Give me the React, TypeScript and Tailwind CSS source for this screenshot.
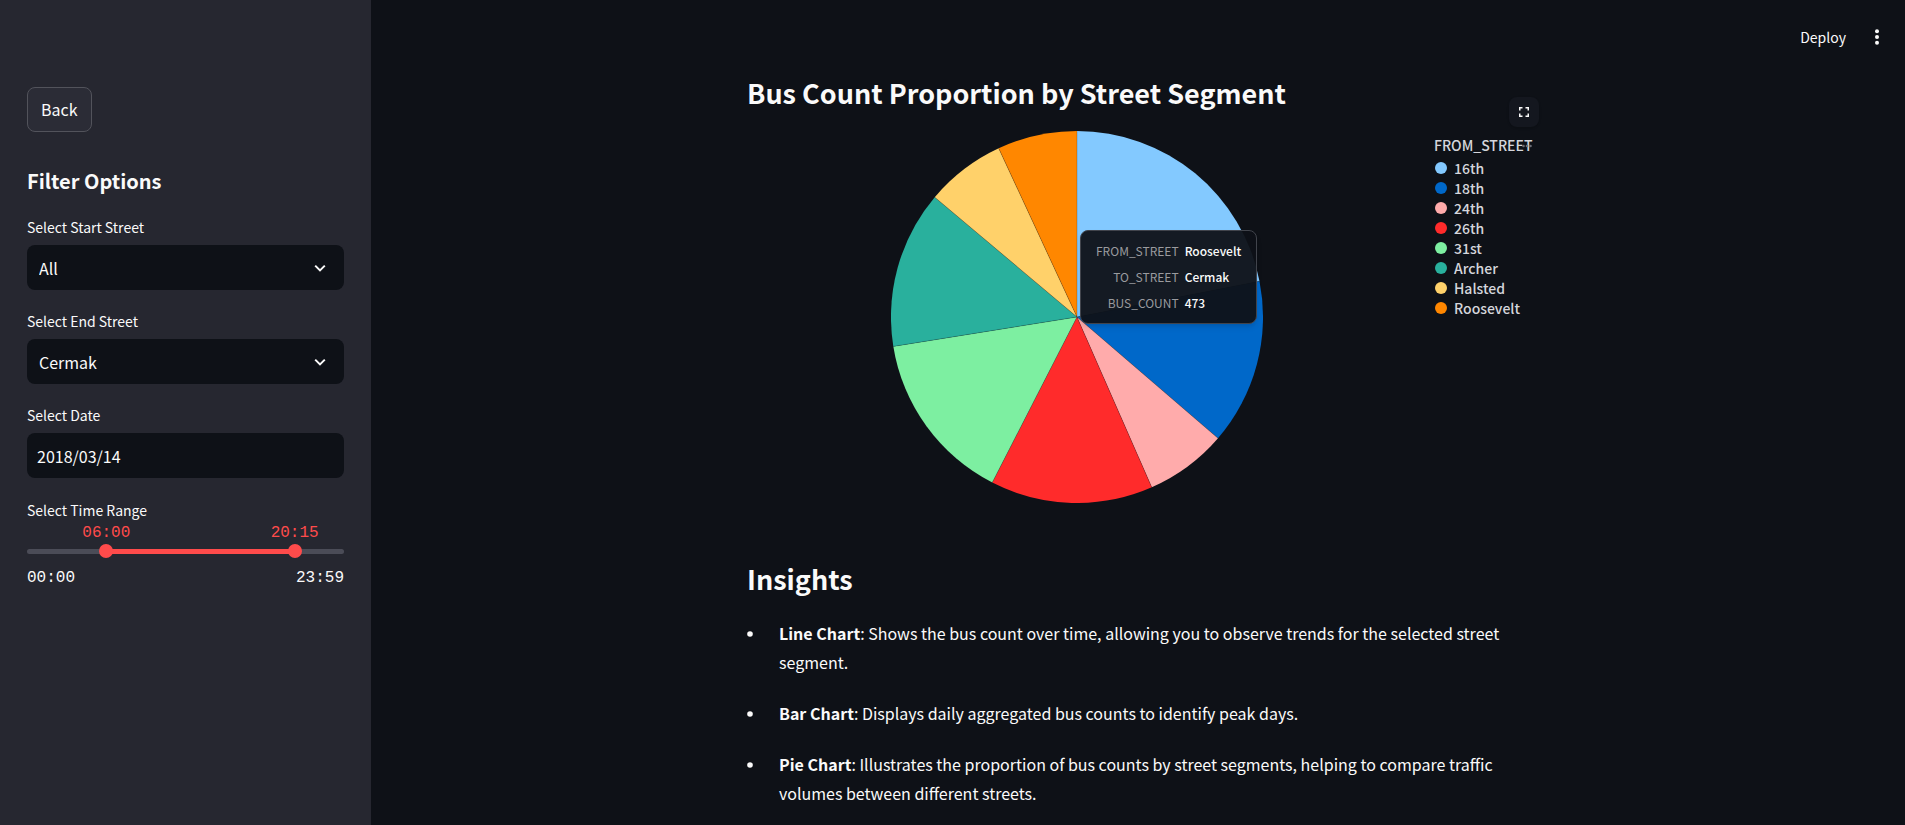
import { useState } from "react";

type Slice = { name: string; color: string; start: number; end: number };

const slices: Slice[] = [
  { name: "16th", color: "#83c9ff", start: 0, end: 78.9 },
  { name: "18th", color: "#0068c9", start: 78.9, end: 130.7 },
  { name: "24th", color: "#ffabab", start: 130.7, end: 156.3 },
  { name: "26th", color: "#ff2b2b", start: 156.3, end: 207.1 },
  { name: "31st", color: "#7defa1", start: 207.1, end: 260.9 },
  { name: "Archer", color: "#29b09d", start: 260.9, end: 310.1 },
  { name: "Halsted", color: "#ffd16a", start: 310.1, end: 335.1 },
  { name: "Roosevelt", color: "#ff8700", start: 335.1, end: 360 },
];

const streets = ["All", "16th", "18th", "24th", "26th", "31st", "Archer", "Cermak", "Halsted", "Roosevelt"];

const insights = [
  {
    title: "Line Chart",
    text: "Shows the bus count over time, allowing you to observe trends for the selected street segment.",
  },
  { title: "Bar Chart", text: "Displays daily aggregated bus counts to identify peak days." },
  {
    title: "Pie Chart",
    text: "Illustrates the proportion of bus counts by street segments, helping to compare traffic volumes between different streets.",
  },
];

const tooltipRows = [
  ["FROM_STREET", "Roosevelt"],
  ["TO_STREET", "Cermak"],
  ["BUS_COUNT", "473"],
];

const LAST_MINUTE = 1439;

function point(angle: number, radius: number) {
  const rad = (angle * Math.PI) / 180;
  return `${radius * Math.sin(rad)} ${-radius * Math.cos(rad)}`;
}

function slicePath(s: Slice, radius: number) {
  const large = s.end - s.start > 180 ? 1 : 0;
  return `M0 0 L${point(s.start, radius)} A${radius} ${radius} 0 ${large} 1 ${point(s.end, radius)} Z`;
}

function clock(minutes: number) {
  const h = String(Math.floor(minutes / 60)).padStart(2, "0");
  const m = String(minutes % 60).padStart(2, "0");
  return `${h}:${m}`;
}

function SelectField({ id, label, initial }: { id: string; label: string; initial: string }) {
  const [value, setValue] = useState(initial);
  return (
    <div className="flex flex-col gap-1">
      <label htmlFor={id} className="text-sm leading-7">
        {label}
      </label>
      <div className="relative">
        <select
          id={id}
          value={value}
          onChange={(e) => setValue(e.target.value)}
          className="h-[45px] w-full appearance-none rounded-lg bg-[#0e1117] px-3 text-base leading-6 text-[#fafafa] outline-none"
        >
          {streets.map((s) => (
            <option key={s}>{s}</option>
          ))}
        </select>
        <svg
          aria-hidden="true"
          viewBox="0 0 12 12"
          className="pointer-events-none absolute top-1/2 right-[18px] size-3 -translate-y-1/2 fill-none stroke-[#fafafa]"
          strokeWidth="2"
        >
          <path d="M1.2 3.6L6 8.4l4.8-4.8" />
        </svg>
      </div>
    </div>
  );
}

const thumbClasses =
  "pointer-events-none absolute -inset-x-[7px] top-0 h-[14px] appearance-none bg-transparent outline-none [&::-webkit-slider-thumb]:pointer-events-auto [&::-webkit-slider-thumb]:size-[14px] [&::-webkit-slider-thumb]:appearance-none [&::-webkit-slider-thumb]:rounded-full [&::-webkit-slider-thumb]:bg-[#ff4b4b]";

function TimeRange() {
  const [from, setFrom] = useState(360);
  const [to, setTo] = useState(1215);
  const left = (from / LAST_MINUTE) * 100;
  const right = (to / LAST_MINUTE) * 100;
  return (
    <fieldset>
      <legend className="text-sm leading-6">Select Time Range</legend>
      <div className="relative h-[22px] font-['Liberation_Mono',monospace] text-base leading-[22px] text-[#ff4b4b]">
        <span className="absolute -translate-x-1/2" style={{ left: `${left}%` }}>
          {clock(from)}
        </span>
        <span className="absolute -translate-x-1/2" style={{ left: `${right}%` }}>
          {clock(to)}
        </span>
      </div>
      <div className="relative flex h-[14px] items-center">
        <div
          className="h-[5px] w-full rounded-full"
          style={{
            background: `linear-gradient(to right, #4b4c57 ${left}%, #ff4b4b ${left}%, #ff4b4b ${right}%, #4b4c57 ${right}%)`,
          }}
        />
        <input
          type="range"
          aria-label="Start time"
          min={0}
          max={LAST_MINUTE}
          value={from}
          onChange={(e) => setFrom(Math.min(Number(e.target.value), to))}
          className={thumbClasses}
        />
        <input
          type="range"
          aria-label="End time"
          min={0}
          max={LAST_MINUTE}
          value={to}
          onChange={(e) => setTo(Math.max(Number(e.target.value), from))}
          className={thumbClasses}
        />
      </div>
      <div className="flex justify-between pt-2 font-['Liberation_Mono',monospace] text-base leading-6">
        <span>00:00</span>
        <span>23:59</span>
      </div>
    </fieldset>
  );
}

function PieChart() {
  return (
    <div className="relative flex gap-[27px] pt-4">
      <div className="flex flex-1 justify-center">
        <div className="relative size-[372px]">
          <svg viewBox="-186 -186 372 372" className="size-full" role="img" aria-label="Bus count by street">
            {slices.map((s) => (
              <path key={s.name} d={slicePath(s, 186)} fill={s.color} />
            ))}
            {slices.map((s) => (
              <path
                key={s.name}
                d={`M0 0 L${point(s.start, 186)}`}
                stroke="#0e1117"
                strokeOpacity="0.3"
                strokeWidth="0.7"
              />
            ))}
          </svg>
          <div
            role="tooltip"
            className="absolute top-[99px] left-[189px] rounded-lg border border-[#41444c] bg-[#0e1117]/95 px-[15px] py-[7px] text-xs leading-[26px] shadow-md"
          >
            <div className="grid grid-cols-[auto_auto] gap-x-[6px] whitespace-nowrap">
              {tooltipRows.map(([key, value]) => (
                <div key={key} className="contents">
                  <span className="text-right text-[#9a9b9f]">{key}</span>
                  <span className="font-medium text-[#fafafa]">{value}</span>
                </div>
              ))}
            </div>
          </div>
        </div>
      </div>
      <div className="w-[105px] pt-1 text-sm leading-5 font-medium text-[#d5d6dc]">
        <div className="pb-[3px]">FROM_STREET</div>
        <ul>
          {slices.map((s) => (
            <li key={s.name} className="flex items-center gap-[7px] pl-px">
              <svg viewBox="0 0 12 12" className="size-3" aria-hidden="true">
                <circle cx="6" cy="6" r="6" fill={s.color} />
              </svg>
              <span>{s.name}</span>
            </li>
          ))}
        </ul>
      </div>
      <button
        type="button"
        aria-label="Chart actions"
        className="absolute top-[27px] right-[7px] flex h-2 w-[10px] items-center"
      >
        <svg viewBox="0 0 10 4" className="h-1 w-[10px] fill-[#6b6d75]">
          <circle cx="1.5" cy="2" r="1.3" />
          <circle cx="5" cy="2" r="1.3" />
          <circle cx="8.5" cy="2" r="1.3" />
        </svg>
      </button>
      <button
        type="button"
        aria-label="Fullscreen"
        className="absolute -top-[18px] right-0 flex size-[30px] items-center justify-center rounded-lg bg-[#14171f] shadow"
      >
        <svg viewBox="0 0 10 10" className="size-[10px] fill-none stroke-[#fafafa]" strokeWidth="1.5">
          <path d="M.75 3.5V.75H3.5M6.5.75h2.75V3.5M9.25 6.5v2.75H6.5M3.5 9.25H.75V6.5" />
        </svg>
      </button>
    </div>
  );
}

export default function App() {
  return (
    <div className="flex h-screen overflow-hidden bg-[#0e1117] font-['Noto_Sans_CJK_SC',sans-serif] text-[#fafafa]">
      <aside className="w-[371px] shrink-0 overflow-y-auto bg-[#262730] px-[27px] pt-[87px]">
        <button
          type="button"
          className="h-[45px] rounded-lg border border-[#52535b] bg-[#2b2c36] px-[13px] pb-[2px] text-base leading-6"
        >
          Back
        </button>
        <h2 className="mt-[33px] text-xl leading-8 font-semibold">Filter Options</h2>
        <form className="mt-4 flex flex-col gap-[17px]">
          <SelectField id="start-street" label="Select Start Street" initial="All" />
          <SelectField id="end-street" label="Select End Street" initial="Cermak" />
          <div className="flex flex-col gap-1">
            <label htmlFor="date" className="text-sm leading-7">
              Select Date
            </label>
            <input
              id="date"
              type="text"
              defaultValue="2018/03/14"
              className="h-[45px] w-full rounded-lg bg-[#0e1117] px-[10px] text-base leading-6 outline-none"
            />
          </div>
          <div className="pt-[3px]">
            <TimeRange />
          </div>
        </form>
      </aside>

      <div className="relative flex-1 overflow-hidden">
        <header className="absolute top-0 right-0 flex h-[74px] items-center gap-6 pr-[21px]">
          <button type="button" className="text-sm leading-5">
            Deploy
          </button>
          <button type="button" aria-label="Main menu" className="flex w-[14px] justify-center">
            <svg viewBox="0 0 4 16" className="h-4 w-1 fill-[#fafafa]">
              <circle cx="2" cy="2.2" r="2" />
              <circle cx="2" cy="8" r="2" />
              <circle cx="2" cy="13.8" r="2" />
            </svg>
          </button>
        </header>
        <main className="flex justify-center pt-[71px] pl-[10px]">
          <div className="w-full max-w-[792px]">
            <h2 className="text-[27px] leading-[44px] font-semibold">Bus Count Proportion by Street Segment</h2>
            <PieChart />
            <h2 className="mt-[54px] text-[27px] leading-[44px] font-semibold">Insights</h2>
            <ul className="mt-[18px] flex flex-col gap-[22px] text-base leading-[29px]">
              {insights.map((item) => (
                <li key={item.title} className="flex gap-[26px]">
                  <svg viewBox="0 0 6 29" className="h-[29px] w-[6px] shrink-0 fill-[#fafafa]" aria-hidden="true">
                    <circle cx="3" cy="15" r="2.8" />
                  </svg>
                  <p>
                    <strong className="font-semibold">{item.title}</strong>
                    {`: ${item.text}`}
                  </p>
                </li>
              ))}
            </ul>
          </div>
        </main>
      </div>
    </div>
  );
}
